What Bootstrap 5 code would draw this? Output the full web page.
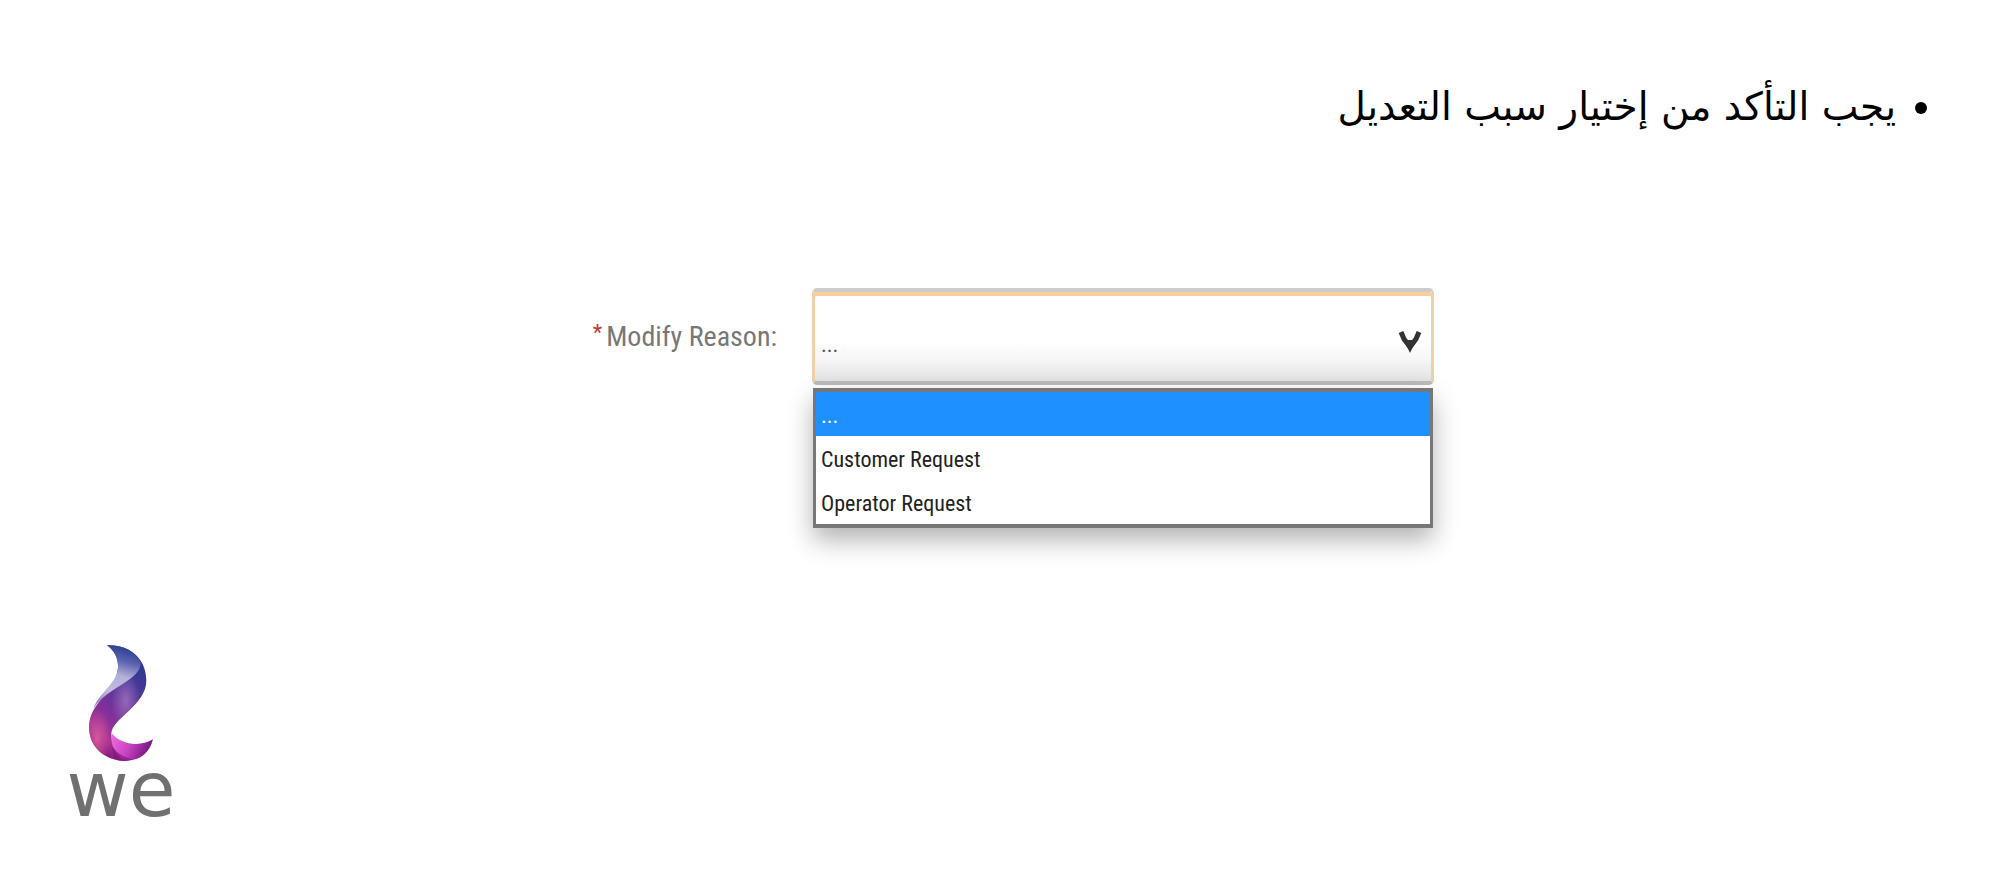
<!DOCTYPE html>
<html lang="ar">
<head>
<meta charset="utf-8">
<meta name="viewport" content="width=device-width, initial-scale=1">
<title>Modify Reason</title>
<link href="https://cdn.jsdelivr.net/npm/bootstrap@5.3.0/dist/css/bootstrap.min.css" rel="stylesheet">
<style>
body { background: #fff; color: #000; font-family: "Liberation Sans", Arial, sans-serif; }
.instructions { font-family: "DejaVu Sans", sans-serif; font-size: 39px; line-height: 64px; padding: 75px 104px 0 0; }
.reason-form { padding-top: 149px; }
.reason-label, .reason-select, .reason-menu .dropdown-item { font-family: "Roboto Condensed", "Liberation Sans Narrow", Lato, sans-serif; }
.reason-label { width: 40.6%; padding-right: 35px; font-size: 28px; line-height: 40px; color: #777; }
.required { color: #c0393b; font-size: 22px; line-height: 32px; }
.reason-field { width: 31.1%; }
.reason-select { height: 97px; padding: 16px 40px 0 6px; border: 3px solid #f0cfac; border-top: 4px solid #ccc; border-bottom: 4px solid #bbb; border-radius: 5px; box-shadow: inset 0 4px #fbcd9d; background: linear-gradient(#fff 55%, #f7f7f7 75%, #e2e2e2); color: #555; font-size: 22px; line-height: 40px; }
.reason-select:focus { border-color: #f0cfac; box-shadow: inset 0 4px #fbcd9d; }
.chevron { position: absolute; right: 12px; top: 40px; pointer-events: none; }
.reason-menu { top: 100px; left: 1px; right: 1px; padding: 0; border: 3px solid #777; border-width: 4px 3px; border-radius: 0; box-shadow: 0 12px 24px rgba(0,0,0,.3); }
.reason-menu .dropdown-item { height: 44px; padding: 0 5px; font-size: 22px; line-height: 48px; color: #222; }
.reason-menu .dropdown-item.active { background: #1e90ff; color: #fff; }
.brand { width: 120px; margin: 259px 0 0 61px; }
.brand-name { font-family: "DejaVu Sans", sans-serif; font-size: 76px; line-height: 56px; color: #707070; }
</style>
</head>
<body>
<main>
  <ul class="instructions mb-0" dir="rtl">
    <li>يجب التأكد من إختيار سبب التعديل</li>
  </ul>
  <form class="reason-form d-flex align-items-center">
    <label class="reason-label d-flex justify-content-end gap-1" for="reason"><span class="required">*</span><span>Modify Reason:</span></label>
    <div class="reason-field position-relative">
      <select class="reason-select form-select" id="reason">
        <option>...</option>
        <option>Customer Request</option>
        <option>Operator Request</option>
      </select>
      <svg class="chevron" width="24" height="26" viewBox="0 0 24 26" aria-hidden="true"><path d="M3 4l3 7 6 8 6-8 3-7" fill="none" stroke="#333" stroke-width="5"/><path d="M6 12h12l-6 13z" fill="#333"/><path d="M8 5h8l-4 7z" fill="#fff"/></svg>
      <div class="reason-menu dropdown-menu show">
        <button type="button" class="dropdown-item active">...</button>
        <button type="button" class="dropdown-item">Customer Request</button>
        <button type="button" class="dropdown-item">Operator Request</button>
      </div>
    </div>
  </form>
  <footer class="brand d-flex flex-column align-items-center" dir="ltr">
    <svg width="66" height="118" viewBox="144 41 198 354" aria-hidden="true">
      <defs>
        <linearGradient id="ribbon" x1=".7" y1="0" x2=".25" y2="1"><stop offset="0" stop-color="#28378d"/><stop offset=".3" stop-color="#4c3a98"/><stop offset=".62" stop-color="#81309a"/><stop offset=".82" stop-color="#a43293"/><stop offset="1" stop-color="#760f72"/></linearGradient>
        <linearGradient id="fold" gradientUnits="userSpaceOnUse" x1="250" y1="44" x2="200" y2="220"><stop offset="0" stop-color="#263a91"/><stop offset=".25" stop-color="#5a62ae"/><stop offset=".5" stop-color="#b4b0da"/><stop offset=".8" stop-color="#c2bbe0"/><stop offset="1" stop-color="#9a86c2"/></linearGradient>
        <linearGradient id="tail" x1="0" y1="0" x2="1" y2=".3"><stop offset="0" stop-color="#ed70dd"/><stop offset=".5" stop-color="#cc45c5"/><stop offset="1" stop-color="#751981"/></linearGradient>
        <radialGradient id="glow" cx=".14" cy=".8" r=".25"><stop offset="0" stop-color="#d6579c"/><stop offset="1" stop-color="#d6579c" stop-opacity="0"/></radialGradient>
        <radialGradient id="sheen" cx=".64" cy=".48" r=".25"><stop offset="0" stop-color="#9567b8"/><stop offset="1" stop-color="#9567b8" stop-opacity="0"/></radialGradient>
      </defs>
      <path d="M201 45C274 43 319 88 319 151C319 224 215 264 214 310C214 354 246 389 270 392C195 396 147 350 147 290C147 217 228 182 234 112C236 85 222 59 201 45Z" fill="url(#ribbon)"/>
      <path d="M201 45C274 43 319 88 319 151C319 224 215 264 214 310C214 354 246 389 270 392C195 396 147 350 147 290C147 217 228 182 234 112C236 85 222 59 201 45Z" fill="url(#glow)"/>
      <path d="M201 45C274 43 319 88 319 151C319 224 215 264 214 310C214 354 246 389 270 392C195 396 147 350 147 290C147 217 228 182 234 112C236 85 222 59 201 45Z" fill="url(#sheen)"/>
      <path d="M201 45C250 43 284 63 302 95C305 151 203 168 160 235C178 185 232 158 234 112C236 85 222 59 201 45Z" fill="url(#fold)"/>
      <path d="M215 309C239 340 297 353 339 327C329 369 296 395 251 390C228 373 209 346 215 309Z" fill="url(#tail)"/>
      <path d="M215 346C229 367 251 382 281 387C266 393 242 394 222 386Z" fill="#7c1678" opacity=".65"/>
    </svg>
    <span class="brand-name">we</span>
  </footer>
</main>
<script src="https://cdn.jsdelivr.net/npm/bootstrap@5.3.0/dist/js/bootstrap.bundle.min.js"></script>
</body>
</html>
